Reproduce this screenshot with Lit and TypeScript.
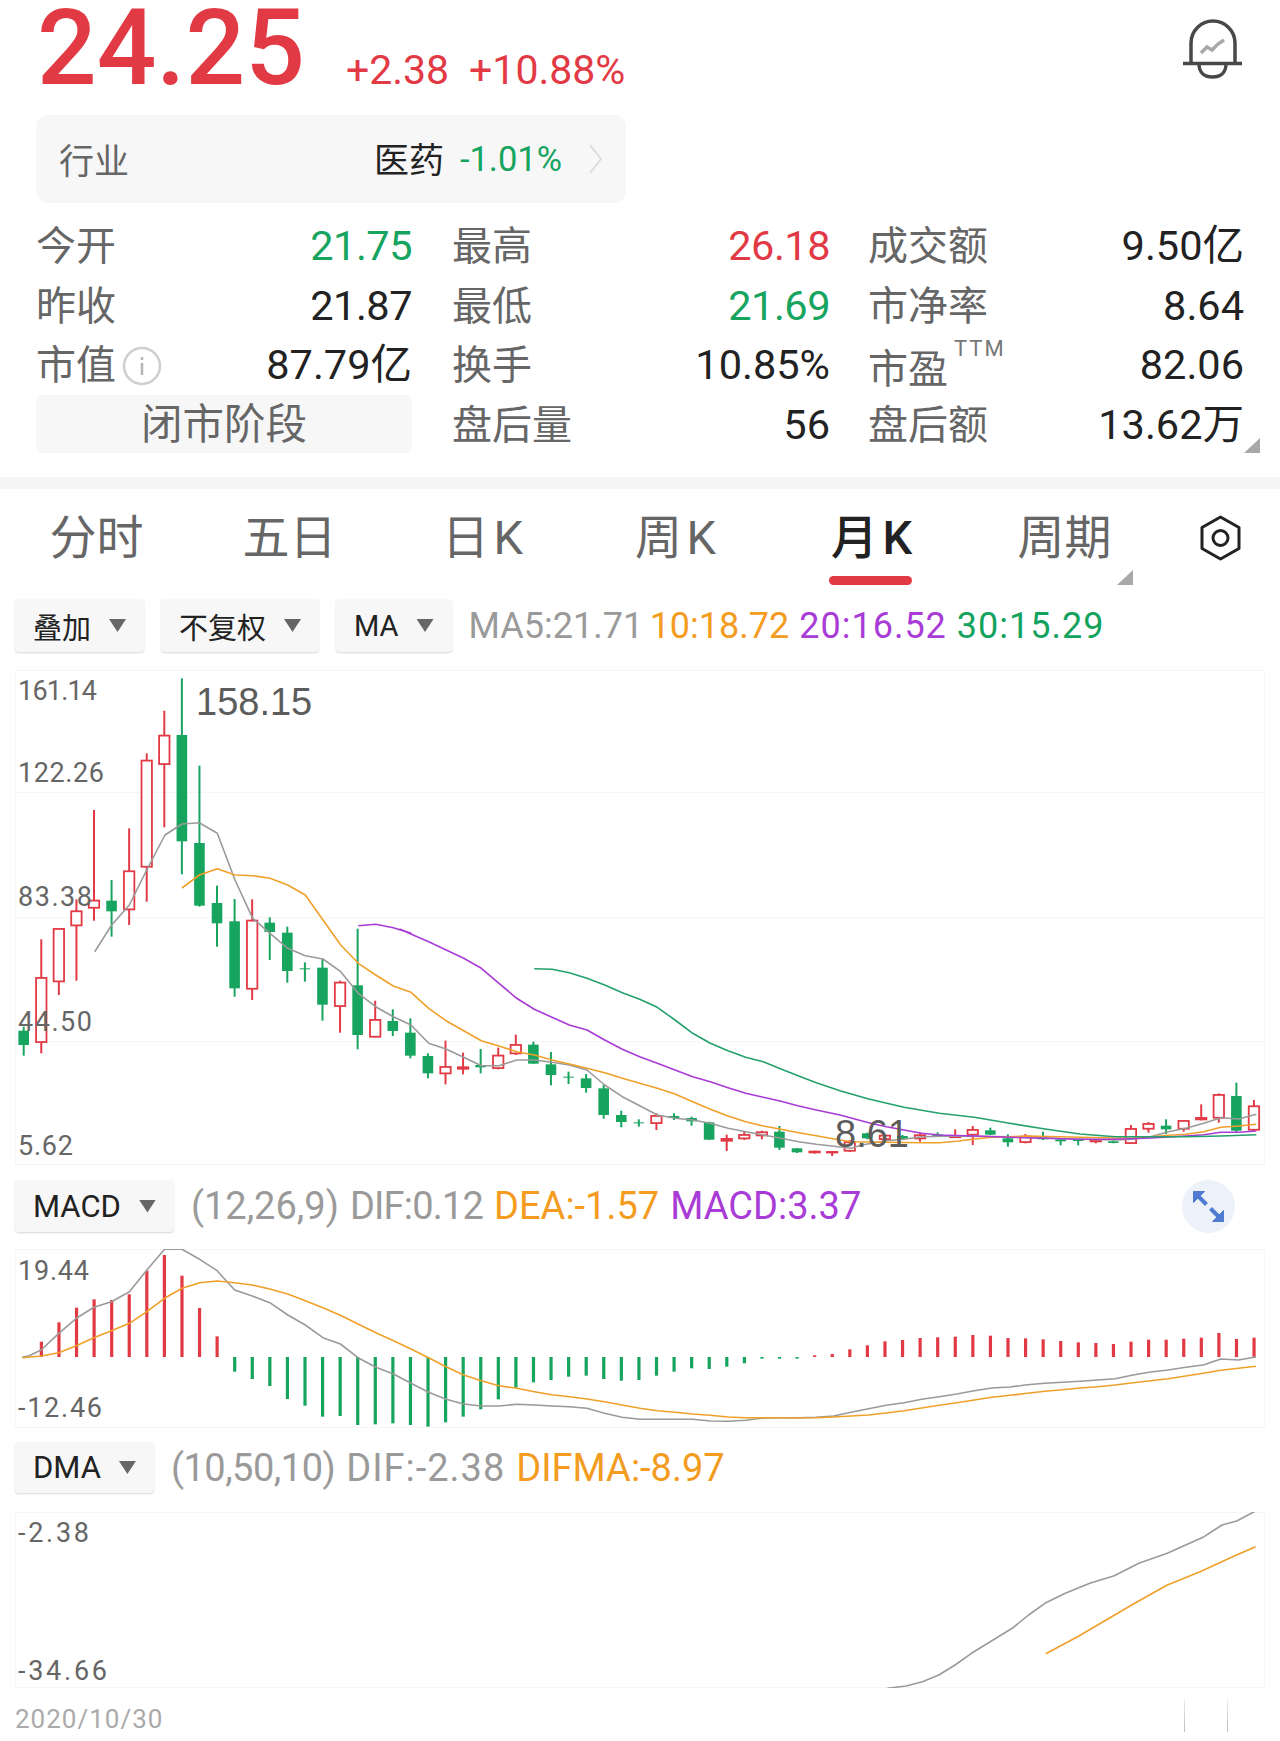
import { LitElement, html, css, svg } from "lit";
import { customElement } from "lit/decorators.js";

const RED = "#e23a45";
const GREEN = "#17a45f";
const GRAY = "#9a9a9a";
const ORANGE = "#f0a02a";
const PURPLE = "#a93bd6";
const TEAL = "#23a06c";

const X = (i: number) => 23.7 + 17.575 * i;

type C = [string, number, number, number, number];
const conv = (list: C[], base: number): C[] =>
  list.map(([t, a, b, c, d]) => [t, base + a / 3, base + b / 3, base + c / 3, base + d / 3] as C);

const candles: C[] = [
  ...conv(
    [
      ["g", 1112, 1155, 1100, 1187],
      ["r", 952, 1148, 838, 1180],
      ["r", 805, 966, 805, 1005],
      ["r", 752, 798, 718, 962],
      ["r", 720, 745, 450, 782],
      ["g", 722, 754, 660, 830],
      ["r", 632, 750, 505, 795],
      ["r", 300, 622, 280, 725],
      ["r", 225, 314, 152, 502],
      ["g", 225, 544, 55, 643],
      ["g", 549, 737, 317, 740],
      ["g", 729, 790, 677, 860],
      ["g", 784, 985, 717, 1010],
      ["r", 780, 988, 718, 1020],
      ["g", 788, 816, 772, 900],
      ["g", 818, 933, 800, 968],
      ["g", 925, 928, 907, 965],
      ["g", 923, 1034, 897, 1082],
      ["r", 966, 1040, 962, 1118],
      ["g", 976, 1125, 806, 1168],
      ["r", 1078, 1132, 1022, 1132],
      ["g", 1083, 1113, 1048, 1128],
      ["g", 1118, 1187, 1075, 1195],
    ],
    660
  ),
  ...conv(
    [
      ["g", 468, 520, 460, 535],
      ["r", 499, 522, 422, 553],
      ["r", 500, 508, 458, 523],
      ["g", 495, 502, 447, 520],
      ["r", 465, 506, 443, 508],
      ["r", 433, 462, 404, 465],
      ["g", 434, 491, 425, 491],
      ["g", 493, 525, 456, 556],
      ["g", 530, 533, 515, 552],
      ["g", 535, 564, 522, 578],
      ["g", 565, 645, 555, 656],
      ["g", 645, 666, 632, 682],
      ["g", 667, 669, 658, 680],
      ["r", 646, 671, 640, 690],
      ["g", 648, 654, 640, 660],
      ["g", 654, 664, 650, 677],
      ["g", 667, 719, 665, 720],
      ["r", 715, 724, 704, 753],
      ["r", 703, 717, 693, 720],
      ["r", 695, 708, 692, 718],
      ["g", 695, 743, 678, 750],
      ["g", 745, 757, 745, 759],
      ["r", 753, 759, 752, 761],
      ["r", 754, 757, 754, 768],
    ],
    900
  ),
  ...conv(
    [
      ["r", 425, 454, 420, 456],
      ["g", 400, 415, 398, 418],
      ["r", 405, 419, 403, 420],
      ["g", 408, 416, 405, 418],
      ["r", 404, 417, 400, 425],
      ["g", 403, 408, 397, 410],
      ["r", 408, 412, 388, 414],
      ["r", 388, 406, 378, 435],
      ["g", 391, 404, 383, 405],
      ["g", 415, 427, 403, 440],
      ["r", 408, 428, 402, 430],
      ["g", 412, 418, 395, 420],
      ["g", 418, 424, 416, 436],
      ["g", 420, 423, 418, 436],
      ["r", 420, 426, 418, 430],
      ["g", 424, 429, 422, 430],
      ["r", 385, 431, 375, 432],
      ["r", 370, 388, 366, 398],
      ["g", 377, 388, 358, 402],
      ["r", 361, 388, 360, 395],
      ["r", 352, 360, 313, 361],
      ["r", 283, 355, 280, 368],
      ["g", 288, 392, 248, 398],
      ["r", 317, 391, 300, 393],
    ],
    1000
  ),
];

const line = (segs: [number[], number, number, number][]) =>
  segs
    .map(([vals, ox, oy, sx]) => {
      const out: string[] = [];
      for (let i = 0; i < vals.length; i += 2) {
        out.push(`${(ox + vals[i] / sx).toFixed(1)},${(oy + vals[i + 1] / 3).toFixed(1)}`);
      }
      return out.join(" ");
    })
    .join(" ");

const ma5 = line([
  [[284,875,335,795,388,735,440,630,495,525,546,492,598,488,652,520,705,660,758,775,810,820,863,865,916,887,969,897,1022,935,1075,1000,1127,1040,1180,1070,1233,1095], 0, 660, 3],
  [[86,430,138,447,191,472,244,497,297,497,350,480,403,480,456,487,508,495,561,510,614,555,667,590,719,617,772,645,825,655,878,660,931,670,984,685,1037,695,1090,705,1143,715,1196,725,1249,733], 400, 900, 3],
  [[33,445,66,435,139,422,192,418,245,410,350,408,509,410,720,418,826,420,879,418,932,410,985,395,1038,385,1091,370,1143,353,1196,357,1249,343], 840, 1000, 3],
]);
const ma10 = line([
  [[546,684,598,645,652,626,705,645,758,647,810,655,863,675,916,705,969,780,1022,855,1075,910,1127,945,1180,978,1233,997], 0, 660, 3],
  [[86,325,138,362,191,392,244,422,297,438,350,455,403,465,456,480,508,492,561,505,614,518,667,535,719,550,772,565,825,582,878,605,931,628,984,648,1037,665,1090,678,1143,688,1196,698,1249,707], 400, 900, 3],
  [[0,420,33,425,139,427,245,428,298,428,350,424,403,417,456,412,509,410,562,408,720,412,826,414,879,415,932,410,985,406,1038,403,1091,395,1143,382,1196,378,1249,373], 840, 1000, 3],
]);
const ma20 = line([
  [[1075,797,1127,793,1180,803,1233,820], 0, 660, 3],
  [[0,88,86,125,191,175,244,205,297,250,350,295,403,328,456,352,508,375,561,390,614,420,667,448,719,470,772,490,825,510,878,530,931,545,984,563,1037,580,1090,592,1143,604,1196,618,1249,630], 400, 900, 3],
  [[0,345,86,368,139,380,192,390,245,400,298,405,403,408,509,412,615,415,720,418,826,418,932,414,1038,408,1091,404,1143,397,1196,397,1249,393], 840, 1000, 3],
]);
const ma30 = line([
  [[403,206,456,208,508,218,561,235,614,255,667,278,719,298,772,322,825,360,878,400,931,430,984,452,1037,472,1090,485,1143,507,1196,528,1249,548], 400, 900, 3],
  [[0,272,86,297,192,322,298,340,403,352,509,370,615,387,720,402,826,410,932,410,1038,410,1143,408,1249,404], 840, 1000, 3],
]);

const macdBars = [
  515,457,413,388,390,373,302,255,317,414,499,
  605,627,648,687,707,740,738,765,763,760,765,770,757,740,718,688,653,637,630,620,617,627,632,
  630,617,605,595,597,590,580,566,566,566,
  556,552,538,526,514,510,504,502,500,495,497,504,505,508,513,517,519,522,515,509,509,506,503,489,507,503,
];
const macdDif = line([
  [[55,561,70,558,101,540,144,490,187,445,230,412,273,395,317,365,360,300,403,238,446,238,489,268,532,302,575,360,618,378,661,398,705,435,748,465,791,503,834,522,877,563,921,592,964,612,1007,640,1050,667,1093,688,1136,702,1179,708,1222,708,1266,703,1309,705,1352,708,1395,710,1438,715,1481,730,1524,742], 0, 1170, 2.45],
  [[0,748,43,748,129,748,172,753,215,754,259,751,302,744,345,743,388,743,431,742,474,738,517,727,560,716,603,706,647,698,690,688,733,680,776,672,819,662,862,654,906,651,949,644,992,640,1035,637,1078,634,1121,630,1164,626,1208,615,1251,606,1294,600,1337,592,1380,585,1423,567,1466,570,1509,561], 640, 1170, 2.45],
]);
const macdDea = line([
  [[55,563,101,558,144,548,187,527,230,503,273,482,317,460,360,425,403,385,446,355,489,338,532,333,575,338,618,345,661,357,705,372,748,392,791,413,834,436,877,462,921,488,964,512,1007,537,1050,563,1093,590,1136,615,1179,632,1222,647,1266,655,1309,665,1352,674,1395,680,1438,687,1481,695,1524,705], 0, 1170, 2.45],
  [[0,715,43,722,86,727,129,732,172,736,215,741,259,743,302,743,388,744,431,743,474,741,517,738,560,735,603,729,647,722,690,714,733,706,776,698,819,690,862,682,906,676,949,670,992,664,1035,659,1078,654,1121,650,1164,645,1208,638,1251,632,1294,626,1337,618,1380,610,1423,601,1466,595,1509,589], 640, 1170, 2.45],
]);
const dmaDif = line([
  [[1087,745,1110,738,1130,725,1150,705,1170,675,1190,640,1210,610,1240,565,1260,525,1280,490,1305,460,1335,430,1365,407,1395,370,1430,340,1475,290,1497,255,1515,243,1538,213], 0, 1440, 1.225],
]);
const dmaMa = line([
  [[1281,641,1320,590,1355,540,1390,490,1430,435,1470,395,1510,350,1538,320], 0, 1440, 1.225],
]);

const dropdown = (label: string) => html`<div class="dd"><span>${label}</span><i class="tri"></i></div>`;

const axis = (y: number, w: number, label: string) =>
  svg`<text x="18" y=${y} textLength=${w} lengthAdjust="spacing">${label}</text>`;

@customElement("app-root")
export class AppRoot extends LitElement {
  static styles = css`
    :host {
      display: block;
      width: 1280px;
      height: 1741px;
      overflow: hidden;
      background: #fff;
      color: #222;
      font-family: Roboto, "Noto Sans CJK SC", sans-serif;
    }
    .head {
      display: flex;
      align-items: baseline;
      height: 115px;
      padding-left: 37px;
      color: #e23a45;
    }
    .price {
      font-size: 105px;
      line-height: 98px;
      font-weight: 500;
      margin-right: 41px;
    }
    .chg {
      font-size: 41px;
      margin-right: 20px;
    }
    .bell {
      align-self: flex-start;
      margin: 19px 37px 0 auto;
      width: 60px;
      height: 60px;
    }
    .pill {
      display: flex;
      align-items: center;
      width: 544px;
      height: 88px;
      margin-left: 36px;
      padding: 0 23px;
      background: #f7f7f7;
      border-radius: 12px;
      font-size: 35px;
    }
    .pill .name { color: #666; flex: 1; padding-bottom: 2px; }
    .pill .ind { padding-bottom: 3px; }
    .pill .pct { color: #17a45f; font-size: 34.5px; margin-left: 16px; }
    .pill svg { margin-left: 26px; }
    .stats {
      position: relative;
      display: grid;
      grid-template-columns: repeat(3, 376px);
      grid-auto-rows: 59.5px;
      column-gap: 40px;
      padding-left: 36px;
      margin-top: 14px;
      font-size: 41.5px;
    }
    .cell {
      display: flex;
      align-items: center;
      justify-content: space-between;
      line-height: 59px;
      white-space: nowrap;
    }
    .cell > span:last-child { padding-bottom: 2px; }
    .cell > span.lab:first-child { padding-bottom: 0; }
    .c2 { margin-right: -2px; }
    .lab { color: #666; display: flex; align-items: center; font-size: 40px; }
    .up { color: #e23a45; }
    .down { color: #17a45f; }
    .n { letter-spacing: -0.5px; }
    .info { margin-left: 6px; }
    .ttm {
      font-size: 22px;
      color: #777;
      letter-spacing: 2px;
      margin: -34px 0 0 6px;
      line-height: 22px;
    }
    .pe { padding-top: 8px; }
    .closed {
      grid-column: 1;
      margin-top: -1px;
      background: #f7f7f7;
      border-radius: 6px;
      text-align: center;
      color: #666;
      line-height: 60px;
      height: 58px;
      font-size: 41.5px;
    }
    .corner {
      position: absolute;
      left: 1244px;
      top: 221px;
      width: 16px;
      height: 15px;
      background: #a8a8a8;
      clip-path: polygon(100% 0, 100% 100%, 0 100%);
    }
    .band {
      height: 12px;
      margin-top: 22px;
      background: #f5f5f5;
    }
    .tabs {
      position: relative;
      display: flex;
      height: 98px;
    }
    .tab {
      position: relative;
      box-sizing: border-box;
      width: 193px;
      text-align: center;
      font-size: 47px;
      line-height: 98px;
      color: #666;
      word-spacing: -7px;
    }
    .tab.shift { padding-left: 6px; }
    .tab.on { color: #222; font-weight: 500; }
    .tab.on::after {
      content: "";
      position: absolute;
      left: 57px;
      bottom: 2px;
      width: 83px;
      height: 9px;
      border-radius: 5px;
      background: #e23a45;
    }
    .tabtri {
      position: absolute;
      left: 1117px;
      top: 81px;
      width: 16px;
      height: 15px;
      background: #a8a8a8;
      clip-path: polygon(100% 0, 100% 100%, 0 100%);
    }
    .gear { margin: 26px 0 0 42px; }
    .bar {
      display: flex;
      align-items: center;
      gap: 17px;
      padding-left: 15px;
      height: 53px;
      font-size: 38px;
      white-space: nowrap;
    }
    .mabar { margin-top: 12px; font-size: 36px; }
    .mabar .vals { gap: 10px; }
    .mabar .o { margin-left: -3.5px; }
    .dd {
      display: flex;
      align-items: center;
      gap: 18px;
      height: 100%;
      padding: 0 18px 0 18px;
      background: #f7f7f7;
      border-radius: 4px;
      box-shadow: 0 1px 2px rgba(0, 0, 0, 0.16);
      font-size: 29px;
      color: #222;
    }
    .macdbar .dd,
    .dmabar .dd { font-size: 31px; }
    .tri {
      display: block;
      width: 17px;
      height: 13px;
      background: #666;
      clip-path: polygon(0 0, 100% 0, 50% 100%);
    }
    .vals { display: flex; gap: 11px; }
    .g { color: #9a9a9a; }
    .o { color: #f39c1f; }
    .p { color: #a93bd6; }
    .t { color: #14a35f; }
    .wide { letter-spacing: 1px; }
    .tight { letter-spacing: -0.8px; }
    .tight2 { letter-spacing: -0.5px; }
    .expand {
      margin: 0 45px 0 auto;
      width: 53px;
      height: 53px;
    }
    svg.chart {
      display: block;
      margin-left: 15px;
      width: 1250px;
    }
    svg.chart text {
      font-family: Roboto, sans-serif;
      font-size: 27px;
      fill: #666;
    }
    svg.chart text.big {
      font-family: "Liberation Sans", sans-serif;
      font-size: 38px;
      fill: #5c5c5c;
    }
    .main { height: 495px; margin-top: 18px; }
    .macdbar { height: 52px; margin-top: 15px; }
    .macd { height: 179px; margin-top: 17px; }
    .dmabar { height: 51px; margin-top: 14px; }
    .dma { height: 176px; margin-top: 19px; }
    .foot {
      display: flex;
      align-items: flex-start;
      height: 53px;
      padding: 0 52px 0 15px;
      font-size: 26px;
      color: #aaa;
      line-height: 30px;
    }
    .date { margin-top: 16px; letter-spacing: 1px; }
    .ticks { display: flex; gap: 42px; margin: 12px 0 0 auto; }
    .ticks i {
      display: block;
      width: 1px;
      height: 32px;
      background: linear-gradient(#eee, #bbb);
    }
  `;

  private frame(y: number, h: number) {
    return svg`<rect x="15.5" y=${y + 0.5} width="1249" height=${h - 1} fill="#fff" stroke="#f6f6f6"/>`;
  }

  private candle(c: C, i: number) {
    const [t, top, bot, hi, lo] = c;
    const x = X(i);
    const col = t === "r" ? RED : GREEN;
    const h = Math.max(bot - top, 1);
    if (t === "r") {
      return svg`<line x1=${x} x2=${x} y1=${hi} y2=${lo} stroke=${col} stroke-width="2"/>
        <rect x=${x - 5.2} y=${top + 0.6} width="10.4" height=${Math.max(h - 1.2, 0.6)} fill="#fff" stroke=${col} stroke-width="1.8"/>`;
    }
    return svg`<line x1=${x} x2=${x} y1=${hi} y2=${lo} stroke=${col} stroke-width="2"/>
      <rect x=${x - 5.3} y=${top} width="10.6" height=${h} fill=${col}/>`;
  }

  private pl(points: string, color: string) {
    return svg`<polyline points=${points} fill="none" stroke=${color} stroke-width="1.6" stroke-linejoin="round"/>`;
  }

  render() {
    return html`
      <div class="head">
        <span class="price">24.25</span>
        <span class="chg">+2.38</span>
        <span class="chg">+10.88%</span>
        <svg class="bell" viewBox="0 0 60 60" fill="none" stroke="#484848" stroke-width="3.500">
          <path d="M8 43V24a22 22 0 0 1 44 0V43" />
          <path d="M0 44.500H59" />
          <path d="M16 45c0 9 6 13 13.500 13S43 54 43 45" />
          <path d="M18 34l6-6 5 3 6-6 6-4" stroke="#a8a8a8" />
        </svg>
      </div>

      <div class="pill">
        <span class="name">行业</span>
        <span class="ind">医药</span>
        <span class="pct">-1.01%</span>
        <svg width="15" height="32" viewBox="0 0 15 32" fill="none" stroke="#dcdcdc" stroke-width="2">
          <path d="M2 2l11 14L2 30" />
        </svg>
      </div>

      <div class="stats">
        <div class="cell"><span class="lab">今开</span><span class="down n">21.75</span></div>
        <div class="cell c2"><span class="lab">最高</span><span class="up n">26.18</span></div>
        <div class="cell"><span class="lab">成交额</span><span>9.50亿</span></div>
        <div class="cell"><span class="lab">昨收</span><span class="n">21.87</span></div>
        <div class="cell c2"><span class="lab">最低</span><span class="down n">21.69</span></div>
        <div class="cell"><span class="lab">市净率</span><span>8.64</span></div>
        <div class="cell">
          <span class="lab">市值
            <svg class="info" width="40" height="40" viewBox="0 0 40 40" fill="none">
              <circle cx="20" cy="20" r="18" stroke="#cfcfcf" stroke-width="2.500" />
              <path d="M20 11v3M20 17v12" stroke="#b5b5b5" stroke-width="2.500" />
            </svg>
          </span>
          <span>87.79亿</span>
        </div>
        <div class="cell c2"><span class="lab">换手</span><span>10.85%</span></div>
        <div class="cell"><span class="lab"><span class="pe">市盈</span><span class="ttm">TTM</span></span><span>82.06</span></div>
        <div class="closed">闭市阶段</div>
        <div class="cell c2"><span class="lab">盘后量</span><span>56</span></div>
        <div class="cell"><span class="lab">盘后额</span><span>13.62万</span></div>
        <i class="corner"></i>
      </div>

      <div class="band"></div>

      <div class="tabs">
        <div class="tab">分时</div>
        <div class="tab">五日</div>
        <div class="tab">日 K</div>
        <div class="tab">周 K</div>
        <div class="tab on shift">月 K</div>
        <div class="tab shift">周期</div>
        <i class="tabtri"></i>
        <svg class="gear" width="41" height="46" viewBox="0 0 41 46" fill="none" stroke="#222" stroke-width="3" stroke-linejoin="round">
          <path d="M20.500 2L39 12.500V33.500L20.500 44 2 33.500V12.500Z" />
          <circle cx="20.500" cy="23" r="7.500" />
        </svg>
      </div>

      <div class="bar mabar">
        ${dropdown("叠加")} ${dropdown("不复权")} ${dropdown("MA")}
        <div class="vals">
          <span class="g">MA5:21.71</span><span class="o">10:18.72</span><span class="p wide">20:16.52</span><span class="t wide">30:15.29</span>
        </div>
      </div>

      <svg class="chart main" viewBox="15 670 1250 495">
        ${this.frame(670, 495)}
        ${[792, 917, 1041].map((y) => svg`<line x1="15" x2="1265" y1=${y + 0.5} y2=${y + 0.5} stroke="#f5f5f5"/>`)}
        ${candles.map((c, i) => this.candle(c, i))}
        ${this.pl(ma5, GRAY)} ${this.pl(ma10, ORANGE)} ${this.pl(ma20, PURPLE)} ${this.pl(ma30, TEAL)}
        ${axis(700, 79, "161.14")}
        ${axis(782, 86, "122.26")}
        ${axis(906, 74, "83.38")}
        ${axis(1031, 74, "44.50")}
        ${axis(1155, 55, "5.62")}
        <text class="big" x="196" y="715">158.15</text>
        <text class="big" x="835" y="1147">8.61</text>
      </svg>

      <div class="bar macdbar">
        ${dropdown("MACD")}
        <div class="vals">
          <span class="g">(12,26,9)</span><span class="g tight">DIF:0.12</span><span class="o">DEA:-1.57</span><span class="p">MACD:3.37</span>
        </div>
        <svg class="expand" viewBox="-26.500 -26.500 53 53">
          <circle r="26.500" fill="#edf1f9" />
          <g stroke="#4f7cd0" stroke-width="4" fill="#4f7cd0">
            <path d="M-13-13L-2-2" />
            <path d="M-15-15H-4L-15-4Z" stroke-width="1" />
            <path d="M13 13L2 2" />
            <path d="M15 15H4L15 4Z" stroke-width="1" />
          </g>
        </svg>
      </div>

      <svg class="chart macd" viewBox="15 1249 1250 179">
        ${this.frame(1249, 179)}
        ${macdBars.map((v, i) => {
          const x = X(i + 1) - 1.5;
          const y = 1170 + v / 3;
          const base = 1357;
          return y < base
            ? svg`<rect x=${x} y=${y} width="3.200" height=${base - y} fill=${RED}/>`
            : svg`<rect x=${x} y=${base} width="3.200" height=${y - base} fill=${GREEN}/>`;
        })}
        ${this.pl(macdDif, GRAY)} ${this.pl(macdDea, ORANGE)}
        ${axis(1280, 71, "19.44")}
        ${axis(1417, 84, "-12.46")}
      </svg>

      <div class="bar dmabar">
        ${dropdown("DMA")}
        <div class="vals">
          <span class="g tight2">(10,50,10)</span><span class="g wide">DIF:-2.38</span><span class="o">DIFMA:-8.97</span>
        </div>
      </div>

      <svg class="chart dma" viewBox="15 1512 1250 176">
        ${this.frame(1512, 176)}
        ${this.pl(dmaDif, GRAY)} ${this.pl(dmaMa, ORANGE)}
        ${axis(1542, 71, "-2.38")}
        ${axis(1680, 89, "-34.66")}
      </svg>

      <div class="foot">
        <span class="date">2020/10/30</span>
        <div class="ticks"><i></i><i></i></div>
      </div>
    `;
  }
}
